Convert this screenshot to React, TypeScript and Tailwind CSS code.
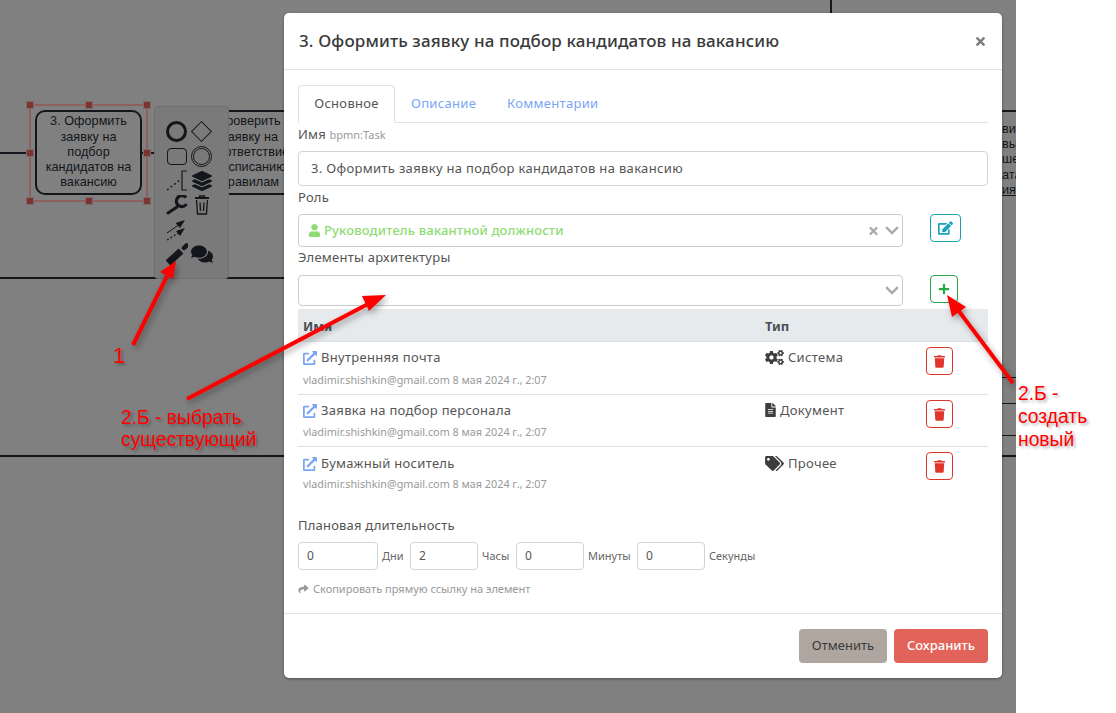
import { FaChevronDown, FaCogs, FaComments, FaEdit, FaExternalLinkAlt, FaFileAlt, FaLayerGroup, FaPlus, FaShare, FaTags, FaTimes, FaTrash, FaUser } from "react-icons/fa";

const rows = [
  { name: "Внутренняя почта", type: "Система", icon: <FaCogs className="h-[15px] w-[19px]" />, box: "h-[53px] border-b border-[#dee2e6]", pad: "pt-[6px]", typePad: "pt-[5px]", sub: "mt-[4px]" },
  { name: "Заявка на подбор персонала", type: "Документ", icon: <FaFileAlt className="h-[14px] w-[11px]" />, box: "h-[52px] border-b border-[#dee2e6]", pad: "pt-[6px]", typePad: "pt-[5px]", sub: "mt-[3px]" },
  { name: "Бумажный носитель", type: "Прочее", icon: <FaTags className="h-[15px] w-[19px]" />, box: "h-[52px]", pad: "pt-[7px]", typePad: "pt-[6px]", sub: "mt-[2px]" },
];

const durations = [
  { value: "0", label: "Дни", input: "w-[80px]", slot: "w-[32px]" },
  { value: "2", label: "Часы", input: "w-[68px]", slot: "w-[38px]" },
  { value: "0", label: "Минуты", input: "w-[68px]", slot: "w-[53px]" },
  { value: "0", label: "Секунды", input: "w-[68px]", slot: "w-[50px]" },
];

const handles = [
  "left-[26px] top-[101px]",
  "left-[85px] top-[101px]",
  "left-[143px] top-[101px]",
  "left-[26px] top-[149px]",
  "left-[143px] top-[149px]",
  "left-[26px] top-[197px]",
  "left-[85px] top-[197px]",
  "left-[143px] top-[197px]",
];

function Palette() {
  return (
    <div className="absolute left-[154px] top-[106px] grid h-[173px] w-[75px] grid-cols-[25px_25px] content-start rounded-sm border border-[#6f6f6f] bg-[#7a7a7a] pl-[9px] pt-[12px] text-[#13161a]">
      <div className="flex h-[24px] items-center justify-center">
        <div className="h-[21px] w-[21px] rounded-full border-[3px] border-[#13161a]" />
      </div>
      <div className="flex h-[24px] items-center justify-center">
        <div className="h-[15px] w-[15px] rotate-45 border-[1.5px] border-[#13161a]" />
      </div>
      <div className="flex h-[26px] items-center justify-center">
        <div className="h-[17px] w-[20px] rounded-[4px] border-[1.5px] border-[#13161a]" />
      </div>
      <div className="flex h-[26px] items-center justify-center">
        <div className="flex h-[21px] w-[21px] items-center justify-center rounded-full border border-[#13161a]">
          <div className="h-[17px] w-[17px] rounded-full border border-[#13161a]" />
        </div>
      </div>
      <div className="flex h-[24px] items-center justify-center">
        <svg width="22" height="22" viewBox="0 0 22 22" fill="none" stroke="#13161a">
          <path d="M1 20 L14 10" strokeWidth="1.5" strokeDasharray="2 2.5" />
          <path d="M21 1 H16 V20 H21" strokeWidth="1.2" />
        </svg>
      </div>
      <div className="flex h-[24px] items-center justify-center">
        <FaLayerGroup className="h-[20px] w-[20px]" />
      </div>
      <div className="flex h-[24px] items-center justify-center">
        <svg width="22" height="20" viewBox="0 0 22 20" fill="none" stroke="#13161a">
          <path d="M2 18 L11 12" strokeWidth="3" strokeLinecap="round" />
          <path d="M20 2.5 A5.5 5.5 0 1 0 20.5 9" strokeWidth="3.2" />
        </svg>
      </div>
      <div className="flex h-[24px] items-center justify-center">
        <svg width="16" height="20" viewBox="0 0 16 20" fill="none" stroke="#13161a" strokeWidth="1.3">
          <path d="M1 3 H15" strokeWidth="2" />
          <path d="M5.5 2.5 V1 H10.5 V2.5" />
          <path d="M2.5 5 L3.5 19 H12.5 L13.5 5" />
          <path d="M6 7.5 L6.5 16 M10 7.5 L9.5 16" />
        </svg>
      </div>
      <div className="flex h-[25px] items-center justify-center">
        <svg width="22" height="22" viewBox="0 0 22 22" fill="#13161a" stroke="#13161a">
          <path d="M1 14 L14 5" strokeWidth="1" fill="none" />
          <path d="M19 1 L9.5 4 L14 9 Z" stroke="none" />
          <path d="M1 21 L14 13" strokeWidth="1.2" strokeDasharray="2 2" fill="none" />
          <path d="M19 9 L10 12 L14 17 Z" stroke="none" />
        </svg>
      </div>
      <div className="h-[25px]" />
      <div className="flex h-[24px] items-center justify-center">
        <svg width="22" height="22" viewBox="0 0 22 22" fill="none" stroke="#13161a">
          <path d="M2 20 L15 8" strokeWidth="7" />
          <path d="M18 5 L20.5 2.5" strokeWidth="4.5" strokeLinecap="round" />
        </svg>
      </div>
      <div className="flex h-[24px] items-center justify-center">
        <FaComments className="h-[20px] w-[22px]" />
      </div>
    </div>
  );
}

function Diagram() {
  return (
    <div className="absolute inset-0 font-['Liberation_Sans',sans-serif] text-[12.7px] leading-[15.2px] text-[#13161a]">
      <div className="absolute left-[830px] top-0 h-[14px] w-[2px] bg-[#13161a]" />
      <div className="absolute left-0 top-[152px] h-[2px] w-[34px] bg-[#13161a]" />
      <div className="absolute left-[140px] top-[152px] h-[2px] w-[14px] bg-[#13161a]" />
      <div className="absolute left-0 top-[277px] h-[2px] w-[284px] bg-[#13161a]" />
      <div className="absolute left-0 top-[455px] h-[2px] w-[284px] bg-[#13161a]" />

      <div className="absolute left-[29px] top-[104px] h-[98px] w-[119px] border-2 border-[#8f5f5d]" />
      <div className="absolute left-[35px] top-[110px] flex h-[85px] w-[107px] items-center justify-center rounded-[10px] border-2 border-[#13161a] text-center">
        <span>
          3. Оформить
          <br />
          заявку на
          <br />
          подбор
          <br />
          кандидатов на
          <br />
          вакансию
        </span>
      </div>
      {handles.map((pos) => (
        <div key={pos} className={`absolute h-[8px] w-[8px] border border-[#7f6a69] bg-[#7c3432] ${pos}`} />
      ))}

      <div className="absolute left-[190px] top-[110px] flex h-[85px] w-[120px] items-center justify-center border-y-2 border-[#13161a] text-center">
        <span>
          проверить
          <br />
          заявку на
          <br />
          соответствие
          <br />
          расписанию
          <br />
          правилам
        </span>
      </div>

      <div className="absolute left-[1002px] top-[110px] flex h-[88px] w-[14px] flex-col overflow-hidden border-t-2 border-[#13161a] pt-[10px] whitespace-nowrap">
        <span>вит</span>
        <span>вы</span>
        <span>ше</span>
        <span>ата</span>
        <span className="underline">ия</span>
      </div>
      <div className="absolute left-[1002px] top-[377px] h-[1px] w-[14px] bg-[#13161a]" />
      <div className="absolute left-[1002px] top-[403px] h-[1px] w-[14px] bg-[#13161a]" />
      <div className="absolute left-[1002px] top-[435px] h-[1px] w-[14px] bg-[#13161a]" />
      <div className="absolute left-[1002px] top-[455px] h-[2px] w-[14px] bg-[#13161a]" />

      <Palette />
    </div>
  );
}

function Modal() {
  return (
    <div className="absolute left-[284px] top-[13px] flex h-[665px] w-[718px] flex-col rounded-[5px] bg-white font-['Noto_Sans',sans-serif] text-[#444] shadow-[0_1px_3px_rgba(0,0,0,0.4)]">
      <div className="flex h-[57px] shrink-0 items-center justify-between border-b border-[#dee2e6] pl-[15px] pr-[16px]">
        <h5 className="text-[17px] font-medium tracking-[0.14px] text-[#3a3a3a]">3. Оформить заявку на подбор кандидатов на вакансию</h5>
        <FaTimes className="h-[13px] w-[11px] text-[#7d7d7d]" />
      </div>

      <div className="flex flex-col px-[14px] pt-[15px]">
        <div className="flex h-[38px] shrink-0 border-b border-[#dee2e6] text-[13px] tracking-[0.3px]">
          <div className="-mb-px flex w-[97px] items-center justify-center rounded-t border border-[#dee2e6] border-b-white bg-white text-[#555]">Основное</div>
          <div className="flex items-center pl-[16px] text-[#7aa5f5]">Описание</div>
          <div className="flex items-center pl-[31px] text-[#7aa5f5]">Комментарии</div>
        </div>

        <div className="mt-[1px] h-[22px] text-[13px] leading-[20px] tracking-[0.2px] text-[#555]">
          Имя <span className="text-[11px] tracking-normal text-[#999]">bpmn:Task</span>
        </div>
        <div className="mt-[5px] flex h-[35px] w-[690px] items-center rounded border border-[#ced4da] px-[12px] text-[13px] tracking-[0.33px] text-[#555]">
          3. Оформить заявку на подбор кандидатов на вакансию
        </div>

        <div className="mt-[2px] h-[26px] text-[13px] leading-[18px] tracking-[0.2px] text-[#555]">Роль</div>
        <div className="flex items-start">
          <div className="flex h-[33px] w-[605px] items-center rounded border border-[#ccc] pl-[9px] pr-[2px] text-[13px] font-medium tracking-[0.15px] text-[#8fdc74]">
            <FaUser className="mr-[3px] h-[13px] w-[13px]" />
            <span className="flex-1 pt-[1px]">Руководитель вакантной должности</span>
            <FaTimes className="mr-[5px] h-[12px] w-[11px] text-[#aaa]" />
            <FaChevronDown className="h-[15px] w-[16px] text-[#aaa]" />
          </div>
          <div className="ml-[27px] flex h-[28px] w-[31px] items-center justify-center rounded border border-[#17a2b8] text-[#17a2b8]">
            <FaEdit className="h-[14px] w-[15px]" />
          </div>
        </div>

        <div className="h-[28px] text-[13px] leading-[20px] tracking-[0.25px] text-[#555]">Элементы архитектуры</div>
        <div className="flex items-start">
          <div className="flex h-[31px] w-[605px] items-center justify-end rounded border border-[#ccc] pr-[2px]">
            <FaChevronDown className="h-[15px] w-[16px] text-[#aaa]" />
          </div>
          <div className="ml-[27px] flex h-[28px] w-[28px] items-center justify-center rounded border border-[#28a745] text-[#28a745]">
            <FaPlus className="h-[12px] w-[12px]" />
          </div>
        </div>

        <div className="mt-[3px] flex h-[33px] w-[690px] items-center border-b border-[#dee2e6] bg-[#e7eaed] pt-[3px] text-[13px] font-bold text-[#495057]">
          <span className="w-[467px] pl-[5px]">Имя</span>
          <span>Тип</span>
        </div>
        {rows.map((row) => (
          <div key={row.name} className={`flex w-[690px] ${row.box}`}>
            <div className={`w-[467px] pl-[5px] ${row.pad}`}>
              <div className="flex h-[20px] items-center text-[13px] tracking-[0.3px] text-[#555]">
                <FaExternalLinkAlt className="mr-[4px] h-[14px] w-[14px] text-[#7aa5f5]" />
                {row.name}
              </div>
              <div className={`text-[10.8px] leading-[16px] text-[#999] ${row.sub}`}>vladimir.shishkin@gmail.com 8 мая 2024 г., 2:07</div>
            </div>
            <div className={`flex w-[161px] items-start gap-[4px] text-[13px] tracking-[0.3px] text-[#555] ${row.typePad}`}>
              <span className="flex h-[20px] items-center text-[#3d3d3d]">{row.icon}</span>
              <span className="leading-[20px]">{row.type}</span>
            </div>
            <div className="pt-[5px]">
              <div className="flex h-[28px] w-[27px] items-center justify-center rounded border border-[#e0352b] text-[#e0352b]">
                <FaTrash className="h-[13px] w-[11px]" />
              </div>
            </div>
          </div>
        ))}

        <div className="mt-[16px] text-[13px] leading-[20px] tracking-[0.2px] text-[#555]">Плановая длительность</div>
        <div className="mt-[7px] flex items-center text-[11px] text-[#666]">
          {durations.map((d) => (
            <div key={d.label} className="flex items-center">
              <div className={`flex h-[28px] items-center rounded border border-[#ced4da] pl-[8px] text-[12px] text-[#555] ${d.input}`}>{d.value}</div>
              <span className={`pl-[4px] ${d.slot}`}>{d.label}</span>
            </div>
          ))}
        </div>
        <div className="mt-[11px] flex items-center text-[11px] leading-[16px] text-[#999]">
          <FaShare className="mr-[4px] h-[10px] w-[11px]" />
          Скопировать прямую ссылку на элемент
        </div>
      </div>

      <div className="mt-auto flex h-[65px] items-center justify-end gap-[7px] border-t border-[#dee2e6] pr-[14px] text-[13px]">
        <div className="flex h-[34px] w-[88px] items-center justify-center rounded bg-[#aea69f] text-[#3a3a3a]">Отменить</div>
        <div className="flex h-[34px] w-[94px] items-center justify-center rounded bg-[#e2635a] font-medium text-white">Сохранить</div>
      </div>
    </div>
  );
}

function Annotations() {
  return (
    <>
      <svg className="absolute inset-0 drop-shadow-[2px_3px_3px_rgba(0,0,0,0.35)]" width="1116" height="713" fill="#ff0000" stroke="none">
        <path d="M133 345 L167 276" stroke="#ff0000" strokeWidth="4" />
        <path d="M176 261 L160 272 L173 279 Z" />
        <path d="M187 399 L368 304" stroke="#ff0000" strokeWidth="4" />
        <path d="M386 295 L362 296 L369 311 Z" />
        <path d="M1013 383 L958 310" stroke="#ff0000" strokeWidth="4" />
        <path d="M947 295 L952 317 L966 307 Z" />
      </svg>
      <div className="absolute inset-0 font-['Liberation_Sans',sans-serif] text-[19.3px] leading-[22px] text-[#ff0000] [text-shadow:2px_2px_3px_rgba(0,0,0,0.3)]">
        <div className="absolute left-[113px] top-[345px] text-[22px]">1</div>
        <div className="absolute left-[121px] top-[407px]">
          2.Б - выбрать
          <br />
          существующий
        </div>
        <div className="absolute left-[1018px] top-[382px] leading-[23px]">
          2.Б -
          <br />
          создать
          <br />
          новый
        </div>
      </div>
    </>
  );
}

export default function App() {
  return (
    <div className="relative h-[713px] w-[1116px] overflow-hidden bg-white">
      <div className="absolute left-0 top-0 flex h-[713px] w-[1016px] flex-col bg-[#808080]">
        <div className="mt-[457px] flex-1 bg-[radial-gradient(#747474_0.6px,transparent_0.9px)] bg-size-[10.4px_10.4px]" />
      </div>
      <Diagram />
      <Modal />
      <Annotations />
    </div>
  );
}
